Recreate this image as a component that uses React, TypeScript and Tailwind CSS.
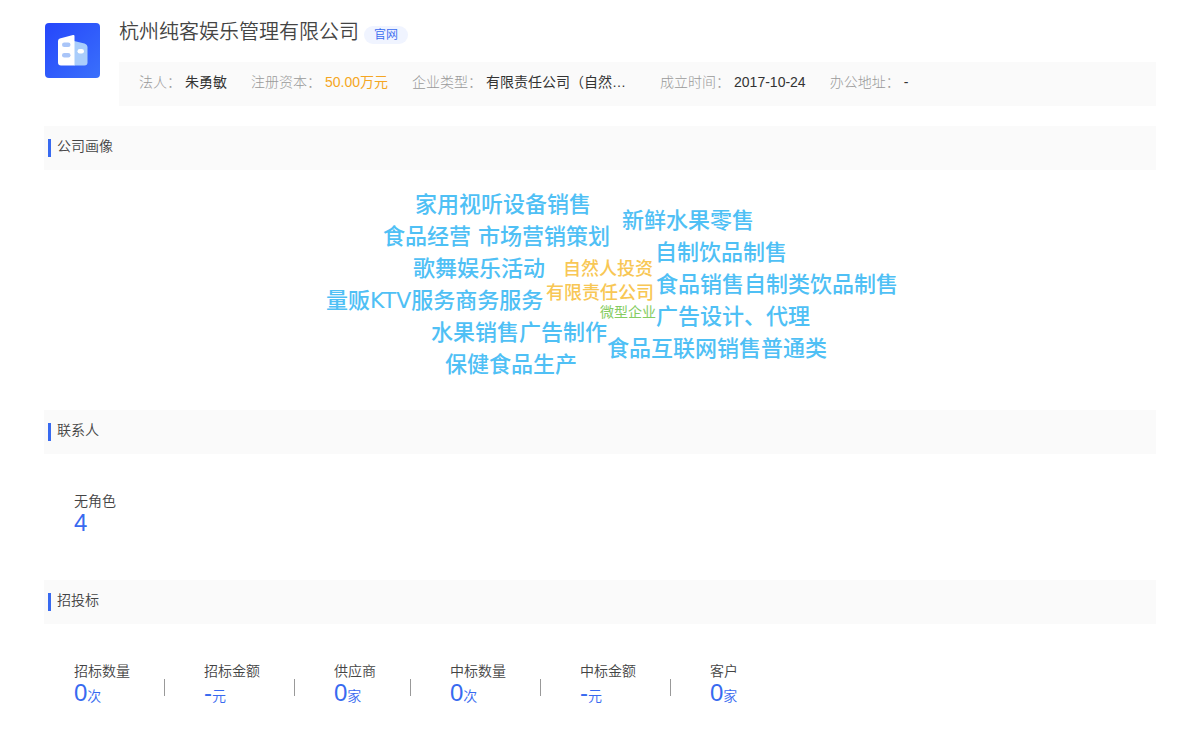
type Fact = { label: string; value: string; className: string }
type Stat = { label: string; value: string; unit?: string }
type Word = { text: string; className: string }

const facts: Fact[] = [
  { label: '法人：', value: '朱勇敏', className: 'mr-6 text-[#333]' },
  { label: '注册资本：', value: '50.00万元', className: 'mr-6 text-[#f5a623]' },
  { label: '企业类型：', value: '有限责任公司（自然…', className: 'mr-6 w-[150px] truncate text-[#333]' },
  { label: '成立时间：', value: '2017-10-24', className: 'mr-6 text-[#333]' },
  { label: '办公地址：', value: '-', className: 'text-[#333]' },
]

const words: Word[] = [
  { text: '家用视听设备销售', className: 'left-[115px] top-[18px] text-[22px] font-medium text-[#4fc0f5]' },
  { text: '新鲜水果零售', className: 'left-[322px] top-[34px] text-[22px] font-medium text-[#4fc0f5]' },
  { text: '食品经营 市场营销策划', className: 'left-[83px] top-[50px] text-[22px] font-medium text-[#4fc0f5]' },
  { text: '自制饮品制售', className: 'left-[355px] top-[66px] text-[22px] font-medium text-[#4fc0f5]' },
  { text: '歌舞娱乐活动', className: 'left-[113px] top-[82px] text-[22px] font-medium text-[#4fc0f5]' },
  { text: '自然人投资', className: 'left-[263px] top-[82px] text-[18px] font-medium text-[#f8c755]' },
  { text: '食品销售自制类饮品制售', className: 'left-[356px] top-[98px] text-[22px] font-medium text-[#4fc0f5]' },
  { text: '有限责任公司', className: 'left-[246px] top-[106px] text-[18px] font-medium text-[#f8c755]' },
  { text: '量贩KTV服务商务服务', className: 'left-[26px] top-[114px] text-[22px] font-medium text-[#4fc0f5]' },
  { text: '微型企业', className: 'left-[300px] top-[125px] text-[14px] text-[#85cc62]' },
  { text: '广告设计、代理', className: 'left-[356px] top-[130px] text-[22px] font-medium text-[#4fc0f5]' },
  { text: '水果销售广告制作', className: 'left-[131px] top-[146px] text-[22px] font-medium text-[#4fc0f5]' },
  { text: '食品互联网销售普通类', className: 'left-[307px] top-[162px] text-[22px] font-medium text-[#4fc0f5]' },
  { text: '保健食品生产', className: 'left-[145px] top-[178px] text-[22px] font-medium text-[#4fc0f5]' },
]

const contacts: Stat[] = [{ label: '无角色', value: '4' }]

const bids: Stat[] = [
  { label: '招标数量', value: '0', unit: '次' },
  { label: '招标金额', value: '-', unit: '元' },
  { label: '供应商', value: '0', unit: '家' },
  { label: '中标数量', value: '0', unit: '次' },
  { label: '中标金额', value: '-', unit: '元' },
  { label: '客户', value: '0', unit: '家' },
]

function CompanyLogo() {
  return (
    <svg className="mt-px ml-px size-[55px] shrink-0" viewBox="0 0 55 55" aria-hidden="true">
      <defs>
        <linearGradient id="logo-bg" x1="0" y1="0" x2="1" y2="1">
          <stop offset="0" stopColor="#2546fb" />
          <stop offset="1" stopColor="#3a70fb" />
        </linearGradient>
      </defs>
      <rect width="55" height="55" rx="4" fill="url(#logo-bg)" />
      <path d="M29 18 39.500 20.500Q42.500 21.500 42.500 24.500V39.500Q42.500 42.500 39.500 42.500H29Z" fill="#a9cdfb" />
      <path d="M13 18Q13 16 14.800 15.400L28 12Q29.500 11.600 29.500 13V42.500H16Q13 42.500 13 39.500Z" fill="#fff" />
      <rect x="17" y="19.500" width="8.500" height="4.500" rx="2.250" fill="#a9c5f8" />
      <rect x="17" y="30" width="8.500" height="4.500" rx="2.250" fill="#a9c5f8" />
      <rect x="32.500" y="26" width="6.500" height="4.500" rx="2.250" fill="#fff" />
    </svg>
  )
}

function SectionTitle({ children }: { children: string }) {
  return (
    <div className="flex h-11 items-center bg-[#fafafa] pl-1">
      <span className="mr-1.5 h-[18px] w-[3px] bg-[#386af0]" />
      <h2 className="pb-1 text-sm font-[350] text-[#444]">{children}</h2>
    </div>
  )
}

function StatList({ items }: { items: Stat[] }) {
  return (
    <ul className="flex flex-wrap px-[30px] pt-9">
      {items.map((item, i) => (
        <li key={item.label} className="flex">
          {i > 0 && <span className="mt-[19px] mr-[39px] ml-[34px] h-[17px] w-px bg-[#999]" />}
          <div>
            <p className="text-sm leading-[22px] font-[350] text-[#444]">{item.label}</p>
            <p className="text-sm leading-[22px] font-[350] text-[#386af0]">
              <span className="text-2xl leading-[22px]">{item.value}</span>
              {item.unit}
            </p>
          </div>
        </li>
      ))}
    </ul>
  )
}

export default function App() {
  return (
    <main className="min-h-screen bg-white px-11 pt-[22px] pb-11 font-['Liberation_Sans','Noto_Sans_CJK_SC',sans-serif]">
      <header className="flex">
        <CompanyLogo />
        <div className="ml-[19px] min-w-0 flex-1">
          <div className="flex h-10 items-start">
            <h1 className="text-xl leading-5 font-[350] text-[#444]">杭州纯客娱乐管理有限公司</h1>
            <a href="#" className="mt-1 ml-[5px] rounded-full bg-[#f0f4ff] px-[10px] text-xs leading-[18px] font-[350] text-[#386af0]">
              官网
            </a>
          </div>
          <dl className="flex h-11 items-center overflow-hidden bg-[#fafafa] px-5 pb-1 text-sm whitespace-nowrap">
            {facts.map((fact) => (
              <div key={fact.label} className="flex">
                <dt className="mr-1 font-light text-[#999]">{fact.label}</dt>
                <dd className={fact.className}>{fact.value}</dd>
              </div>
            ))}
          </dl>
        </div>
      </header>

      <section className="mt-5">
        <SectionTitle>公司画像</SectionTitle>
        <div className="relative mx-auto h-60 w-[600px]">
          {words.map((word) => (
            <span
              key={word.text}
              className={`absolute leading-[34px] whitespace-nowrap font-['DejaVu_Sans','Noto_Sans_CJK_SC',sans-serif] ${word.className}`}
            >
              {word.text}
            </span>
          ))}
        </div>
      </section>

      <section className="pb-[43px]">
        <SectionTitle>联系人</SectionTitle>
        <StatList items={contacts} />
      </section>

      <section>
        <SectionTitle>招投标</SectionTitle>
        <StatList items={bids} />
      </section>
    </main>
  )
}
